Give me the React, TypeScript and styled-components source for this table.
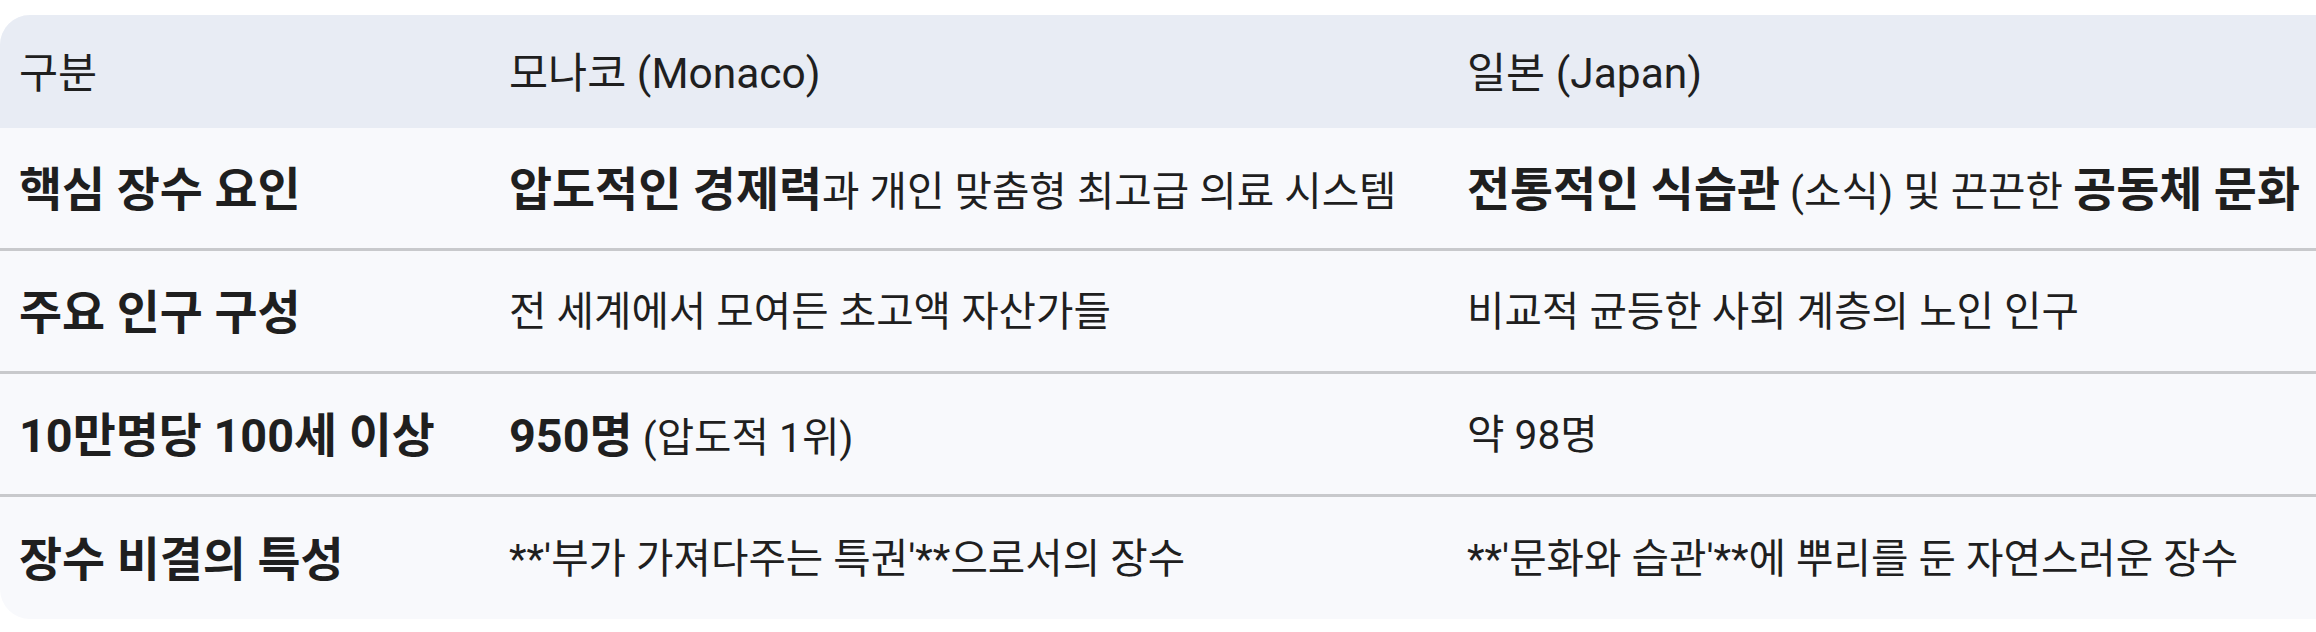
import React from 'react';
import styled, { createGlobalStyle } from 'styled-components';

const GlobalStyle = createGlobalStyle`
  html, body {
    margin: 0;
    padding: 0;
    background: #ffffff;
  }
  body {
    font-family: Roboto, "Noto Sans CJK KR", sans-serif;
    color: #1f1f1f;
    overflow: hidden;
  }
`;

const Page = styled.div`
  width: 2316px;
  padding-top: 15px;
  overflow: hidden;
`;

const Table = styled.table`
  width: 2380px;
  table-layout: fixed;
  border-collapse: separate;
  border-spacing: 0;
  background: #f8f9fc;
  border-radius: 30px;
  overflow: hidden;
`;

const HeadRow = styled.tr`
  background: #e8ecf4;
`;

const Th = styled.th`
  box-sizing: border-box;
  height: 113px;
  padding: 0 19px 5px;
  text-align: left;
  vertical-align: middle;
  font-size: 42.5px;
  font-weight: 400;
  white-space: nowrap;
`;

const Row = styled.tr`
  &:last-child td {
    border-bottom: none;
    height: 122px;
  }
`;

const Td = styled.td<{ $label?: boolean }>`
  box-sizing: border-box;
  height: 123px;
  padding: 0 19px 5px;
  vertical-align: middle;
  border-bottom: 3px solid #c8c9cc;
  white-space: nowrap;
  font-size: ${p => (p.$label ? '46.8px' : '40.7px')};
  font-weight: ${p => (p.$label ? 700 : 400)};
`;

const Strong = styled.b`
  font-size: 46.8px;
  font-weight: 700;
`;

type Item = { label: string; monaco: React.ReactNode; japan: React.ReactNode };

const rows: Item[] = [
  {
    label: '핵심 장수 요인',
    monaco: (
      <>
        <Strong>압도적인 경제력</Strong>과 개인 맞춤형 최고급 의료 시스템
      </>
    ),
    japan: (
      <>
        <Strong>전통적인 식습관</Strong> (소식) 및 끈끈한 <Strong>공동체 문화</Strong>
      </>
    ),
  },
  {
    label: '주요 인구 구성',
    monaco: '전 세계에서 모여든 초고액 자산가들',
    japan: '비교적 균등한 사회 계층의 노인 인구',
  },
  {
    label: '10만명당 100세 이상',
    monaco: (
      <>
        <Strong>950명</Strong> (압도적 1위)
      </>
    ),
    japan: '약 98명',
  },
  {
    label: '장수 비결의 특성',
    monaco: "**'부가 가져다주는 특권'**으로서의 장수",
    japan: "**'문화와 습관'**에 뿌리를 둔 자연스러운 장수",
  },
];

export default function App() {
  return (
    <>
      <GlobalStyle />
      <Page>
        <Table>
          <colgroup>
            <col style={{ width: 490 }} />
            <col style={{ width: 958 }} />
            <col />
          </colgroup>
          <thead>
            <HeadRow>
              <Th>구분</Th>
              <Th>모나코 (Monaco)</Th>
              <Th>일본 (Japan)</Th>
            </HeadRow>
          </thead>
          <tbody>
            {rows.map(r => (
              <Row key={r.label}>
                <Td $label>{r.label}</Td>
                <Td>{r.monaco}</Td>
                <Td>{r.japan}</Td>
              </Row>
            ))}
          </tbody>
        </Table>
      </Page>
    </>
  );
}
